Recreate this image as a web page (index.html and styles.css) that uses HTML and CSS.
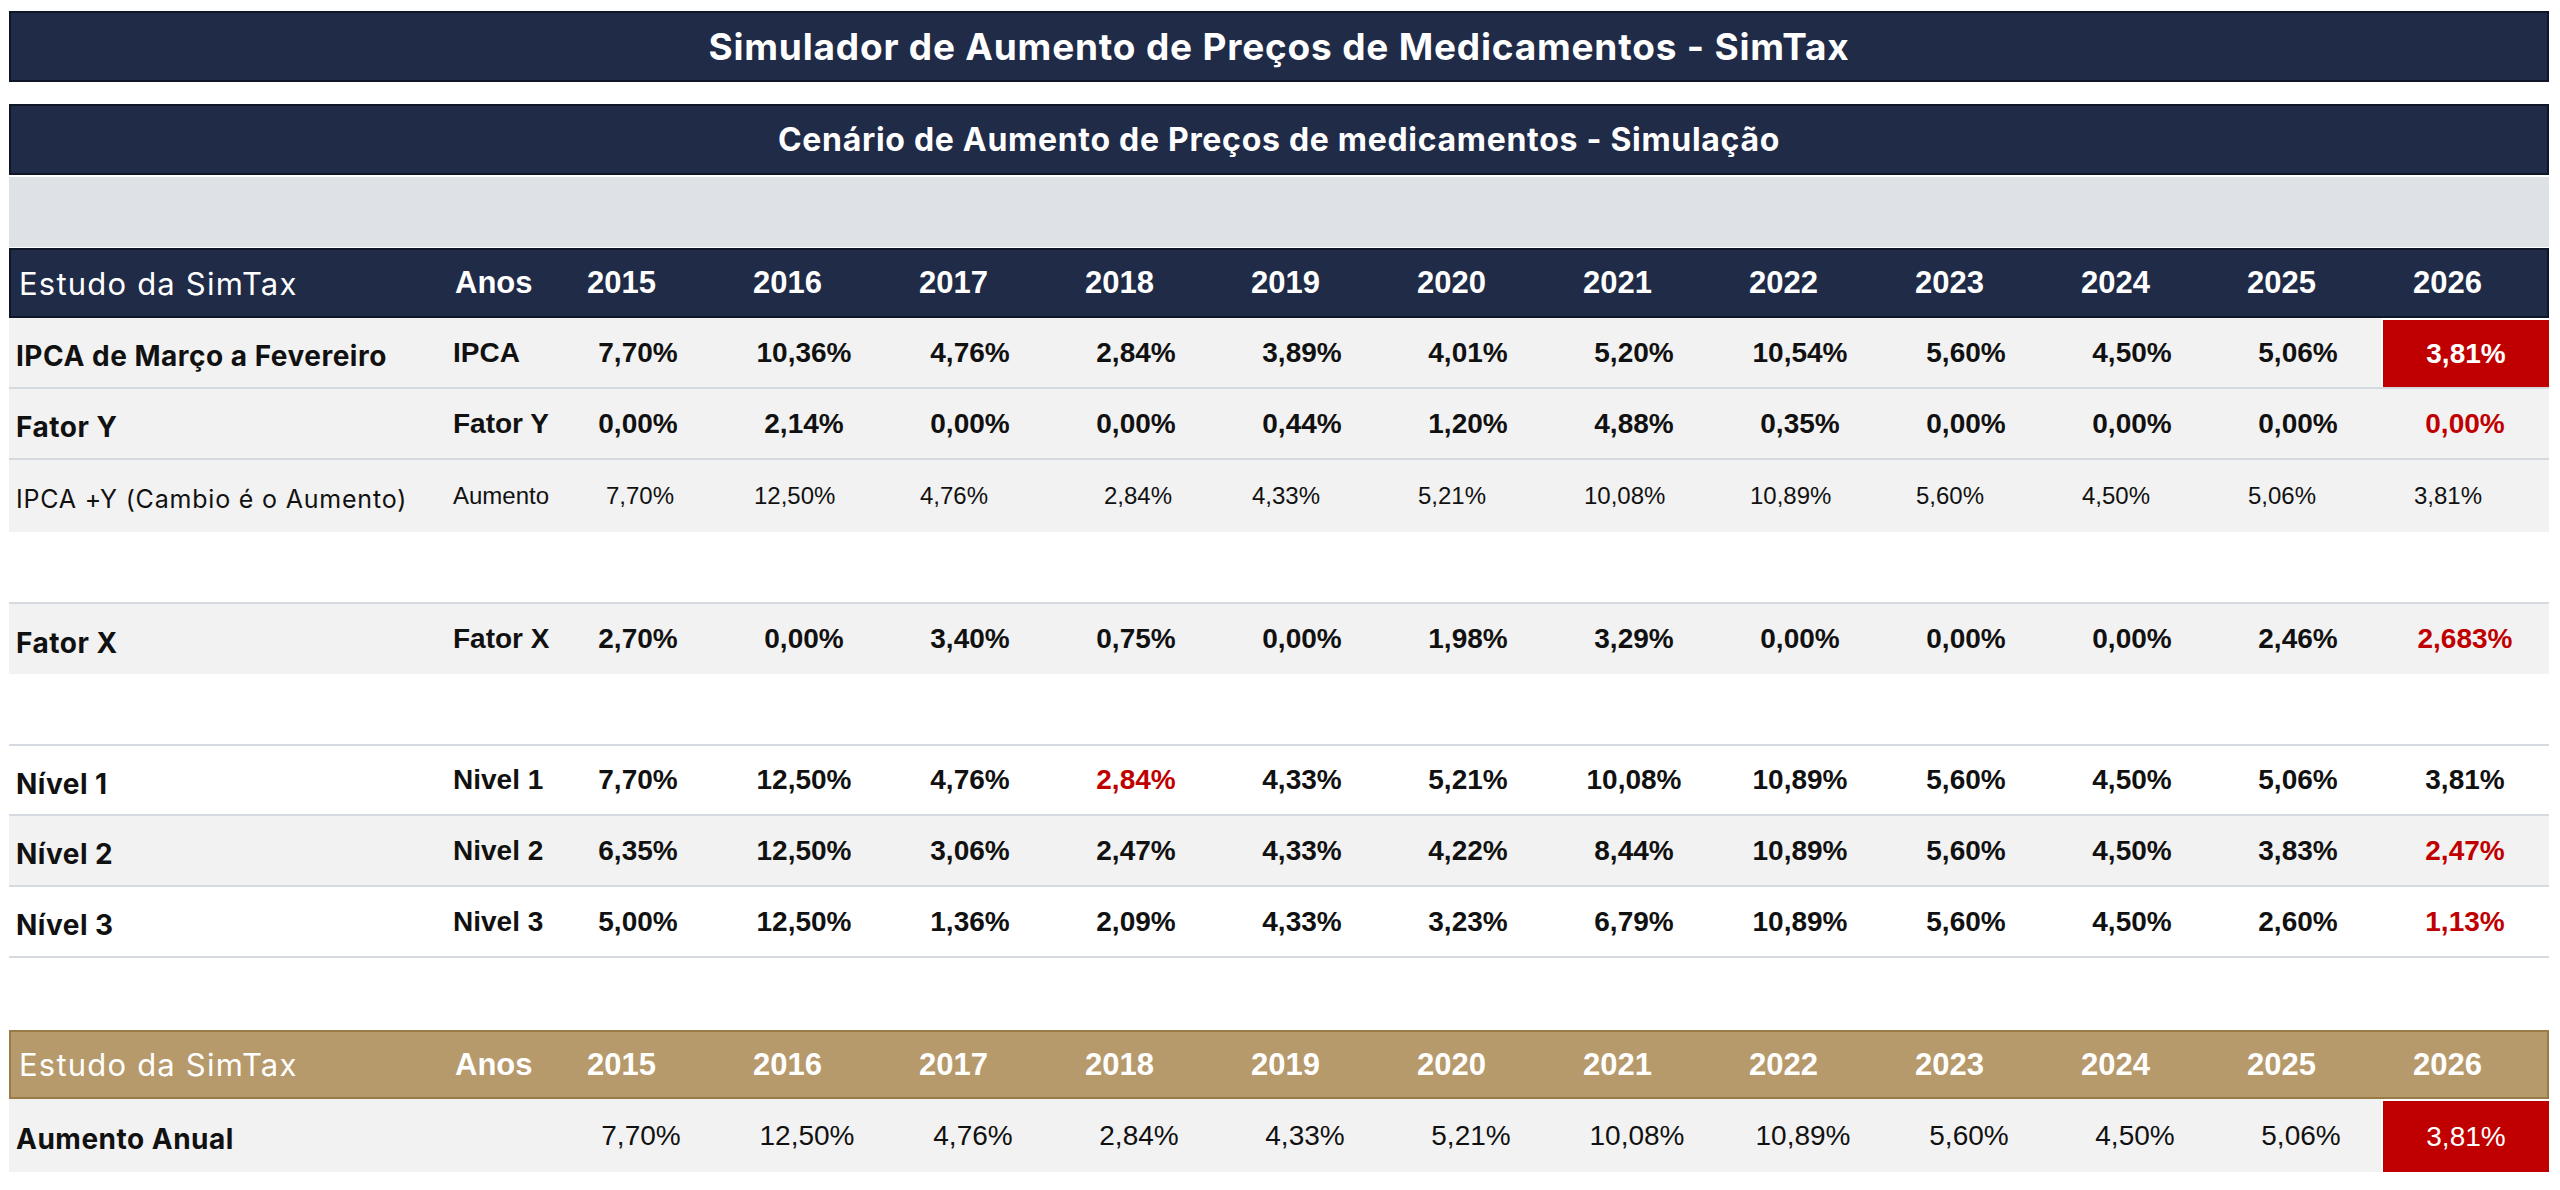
FILE: index.html
```html
<!DOCTYPE html>
<html lang="pt-BR">
<head>
<meta charset="utf-8">
<title>SimTax</title>
<link rel="stylesheet" href="styles.css">
</head>
<body>
<div class="page">
  <div class="bar title">Simulador de Aumento de Preços de Medicamentos - SimTax</div>
  <div class="bar subtitle">Cenário de Aumento de Preços de medicamentos - Simulação</div>
  <div class="band"></div>

  <div class="row head navy">
    <div class="lbl light">Estudo da SimTax</div>
    <div class="key">Anos</div>
    <div class="yr">2015</div><div class="yr">2016</div><div class="yr">2017</div><div class="yr">2018</div><div class="yr">2019</div><div class="yr">2020</div><div class="yr">2021</div><div class="yr">2022</div><div class="yr">2023</div><div class="yr">2024</div><div class="yr">2025</div><div class="yr">2026</div>
  </div>

  <div class="row r-ipca shaded bb">
    <div class="lbl">IPCA de Março a Fevereiro</div>
    <div class="key">IPCA</div>
    <div class="v">7,70%</div><div class="v">10,36%</div><div class="v">4,76%</div><div class="v">2,84%</div><div class="v">3,89%</div><div class="v">4,01%</div><div class="v">5,20%</div><div class="v">10,54%</div><div class="v">5,60%</div><div class="v">4,50%</div><div class="v">5,06%</div><div class="v hl">3,81%</div>
  </div>

  <div class="row r-fy shaded bb">
    <div class="lbl">Fator Y</div>
    <div class="key">Fator Y</div>
    <div class="v">0,00%</div><div class="v">2,14%</div><div class="v">0,00%</div><div class="v">0,00%</div><div class="v">0,44%</div><div class="v">1,20%</div><div class="v">4,88%</div><div class="v">0,35%</div><div class="v">0,00%</div><div class="v">0,00%</div><div class="v">0,00%</div><div class="v red">0,00%</div>
  </div>

  <div class="row r-aum shaded small">
    <div class="lbl reg">IPCA +Y (Cambio é o Aumento)</div>
    <div class="key">Aumento</div>
    <div class="v far">7,70%</div><div class="v">12,50%</div><div class="v">4,76%</div><div class="v far">2,84%</div><div class="v">4,33%</div><div class="v">5,21%</div><div class="v">10,08%</div><div class="v">10,89%</div><div class="v">5,60%</div><div class="v">4,50%</div><div class="v">5,06%</div><div class="v">3,81%</div>
  </div>

  <div class="spacer"></div>

  <div class="row r-fx shaded bt">
    <div class="lbl">Fator X</div>
    <div class="key">Fator X</div>
    <div class="v">2,70%</div><div class="v">0,00%</div><div class="v">3,40%</div><div class="v">0,75%</div><div class="v">0,00%</div><div class="v">1,98%</div><div class="v">3,29%</div><div class="v">0,00%</div><div class="v">0,00%</div><div class="v">0,00%</div><div class="v">2,46%</div><div class="v red">2,683%</div>
  </div>

  <div class="spacer"></div>

  <div class="row r-n1 bt bb">
    <div class="lbl">Nível 1</div>
    <div class="key">Nivel 1</div>
    <div class="v">7,70%</div><div class="v">12,50%</div><div class="v">4,76%</div><div class="v red">2,84%</div><div class="v">4,33%</div><div class="v">5,21%</div><div class="v">10,08%</div><div class="v">10,89%</div><div class="v">5,60%</div><div class="v">4,50%</div><div class="v">5,06%</div><div class="v">3,81%</div>
  </div>

  <div class="row r-n2 shaded bb">
    <div class="lbl">Nível 2</div>
    <div class="key">Nivel 2</div>
    <div class="v">6,35%</div><div class="v">12,50%</div><div class="v">3,06%</div><div class="v">2,47%</div><div class="v">4,33%</div><div class="v">4,22%</div><div class="v">8,44%</div><div class="v">10,89%</div><div class="v">5,60%</div><div class="v">4,50%</div><div class="v">3,83%</div><div class="v red">2,47%</div>
  </div>

  <div class="row r-n3 bb">
    <div class="lbl">Nível 3</div>
    <div class="key">Nivel 3</div>
    <div class="v">5,00%</div><div class="v">12,50%</div><div class="v">1,36%</div><div class="v">2,09%</div><div class="v">4,33%</div><div class="v">3,23%</div><div class="v">6,79%</div><div class="v">10,89%</div><div class="v">5,60%</div><div class="v">4,50%</div><div class="v">2,60%</div><div class="v red">1,13%</div>
  </div>

  <div class="spacer tall"></div>

  <div class="row head gold">
    <div class="lbl light">Estudo da SimTax</div>
    <div class="key">Anos</div>
    <div class="yr">2015</div><div class="yr">2016</div><div class="yr">2017</div><div class="yr">2018</div><div class="yr">2019</div><div class="yr">2020</div><div class="yr">2021</div><div class="yr">2022</div><div class="yr">2023</div><div class="yr">2024</div><div class="yr">2025</div><div class="yr">2026</div>
  </div>

  <div class="row r-total shaded thin">
    <div class="lbl">Aumento Anual</div>
    <div class="key"></div>
    <div class="v">7,70%</div><div class="v">12,50%</div><div class="v">4,76%</div><div class="v">2,84%</div><div class="v">4,33%</div><div class="v">5,21%</div><div class="v">10,08%</div><div class="v">10,89%</div><div class="v">5,60%</div><div class="v">4,50%</div><div class="v">5,06%</div><div class="v hl">3,81%</div>
  </div>
</div>
</body>
</html>
```

FILE: styles.css
```css
* { box-sizing: border-box; }

html, body {
  margin: 0;
  padding: 0;
  background: #ffffff;
}

body {
  font-family: "Liberation Sans", Arial, sans-serif;
  color: #111111;
}

.page {
  width: 2540px;
  margin: 0 0 0 9px;
  padding-top: 11px;
}

.bar {
  height: 71px;
  background: #1f2b47;
  border: 2px solid #0e1628;
  color: #ffffff;
  font-family: "Inter", "Noto Sans", sans-serif;
  font-weight: 700;
  display: flex;
  align-items: center;
  justify-content: center;
}

.title {
  font-size: 37px;
  letter-spacing: 0.8px;
}

.subtitle {
  margin-top: 22px;
  font-size: 32px;
  letter-spacing: 0.7px;
}

.band {
  margin-top: 2px;
  height: 70px;
  background: #dee1e6;
}

.row {
  display: grid;
  grid-template-columns: 431px 115px repeat(11, 166px) 168px;
  height: 71px;
}

.row > div {
  display: flex;
  align-items: center;
  height: 100%;
}

.shaded { background: #f2f2f2; }
.bb { border-bottom: 2px solid #d5d9e0; }
.bt { border-top: 2px solid #d5d9e0; }

.spacer { height: 70px; }
.spacer.tall { height: 72px; }

/* header rows */
.head {
  margin-top: 1px;
  height: 70px;
  color: #ffffff;
}

.navy {
  background: #1f2b47;
  border: 2px solid #0e1628;
}

.gold {
  background: #b69a6b;
  border: 2px solid #9a7a45;
  height: 69px;
  margin-top: 0;
}

.head .yr,
.head .key {
  font-size: 31px;
  font-weight: 700;
}

.head .yr { padding-left: 30px; }

/* label column */
.lbl {
  padding-left: 7px;
  font-family: "Inter", "Noto Sans", sans-serif;
  font-weight: 700;
  font-size: 28px;
  letter-spacing: 0.5px;
  padding-top: 7px;
}

.lbl.light {
  font-weight: 400;
  font-size: 31px;
  letter-spacing: 1.2px;
  padding-top: 0;
  padding-left: 8px;
}

.lbl.reg {
  font-weight: 400;
  font-size: 25px;
  letter-spacing: 0.8px;
  padding-top: 5px;
}

.key {
  padding-left: 13px;
  font-size: 28px;
  font-weight: 700;
}

.v {
  justify-content: center;
  font-size: 28px;
  font-weight: 700;
}

.red { color: #c00000; }

.hl {
  background: #c00000;
  color: #ffffff;
  border-left: 2px solid #ffffff;
  border-top: 2px solid #ffffff;
}

/* row specifics */
.small { height: 72px; }
.small .key { font-size: 24px; font-weight: 400; }
.small .v {
  font-size: 24px;
  font-weight: 400;
  justify-content: flex-start;
  padding-left: 33px;
}
.small .v.far { padding-left: 51px; }

.r-fx { height: 72px; }
.r-n1 { height: 72px; }

.thin { height: 73px; margin-top: 0; }
.thin .v {
  font-weight: 400;
  padding-left: 6px;
}
.thin .v.hl { padding-left: 0; }
```
